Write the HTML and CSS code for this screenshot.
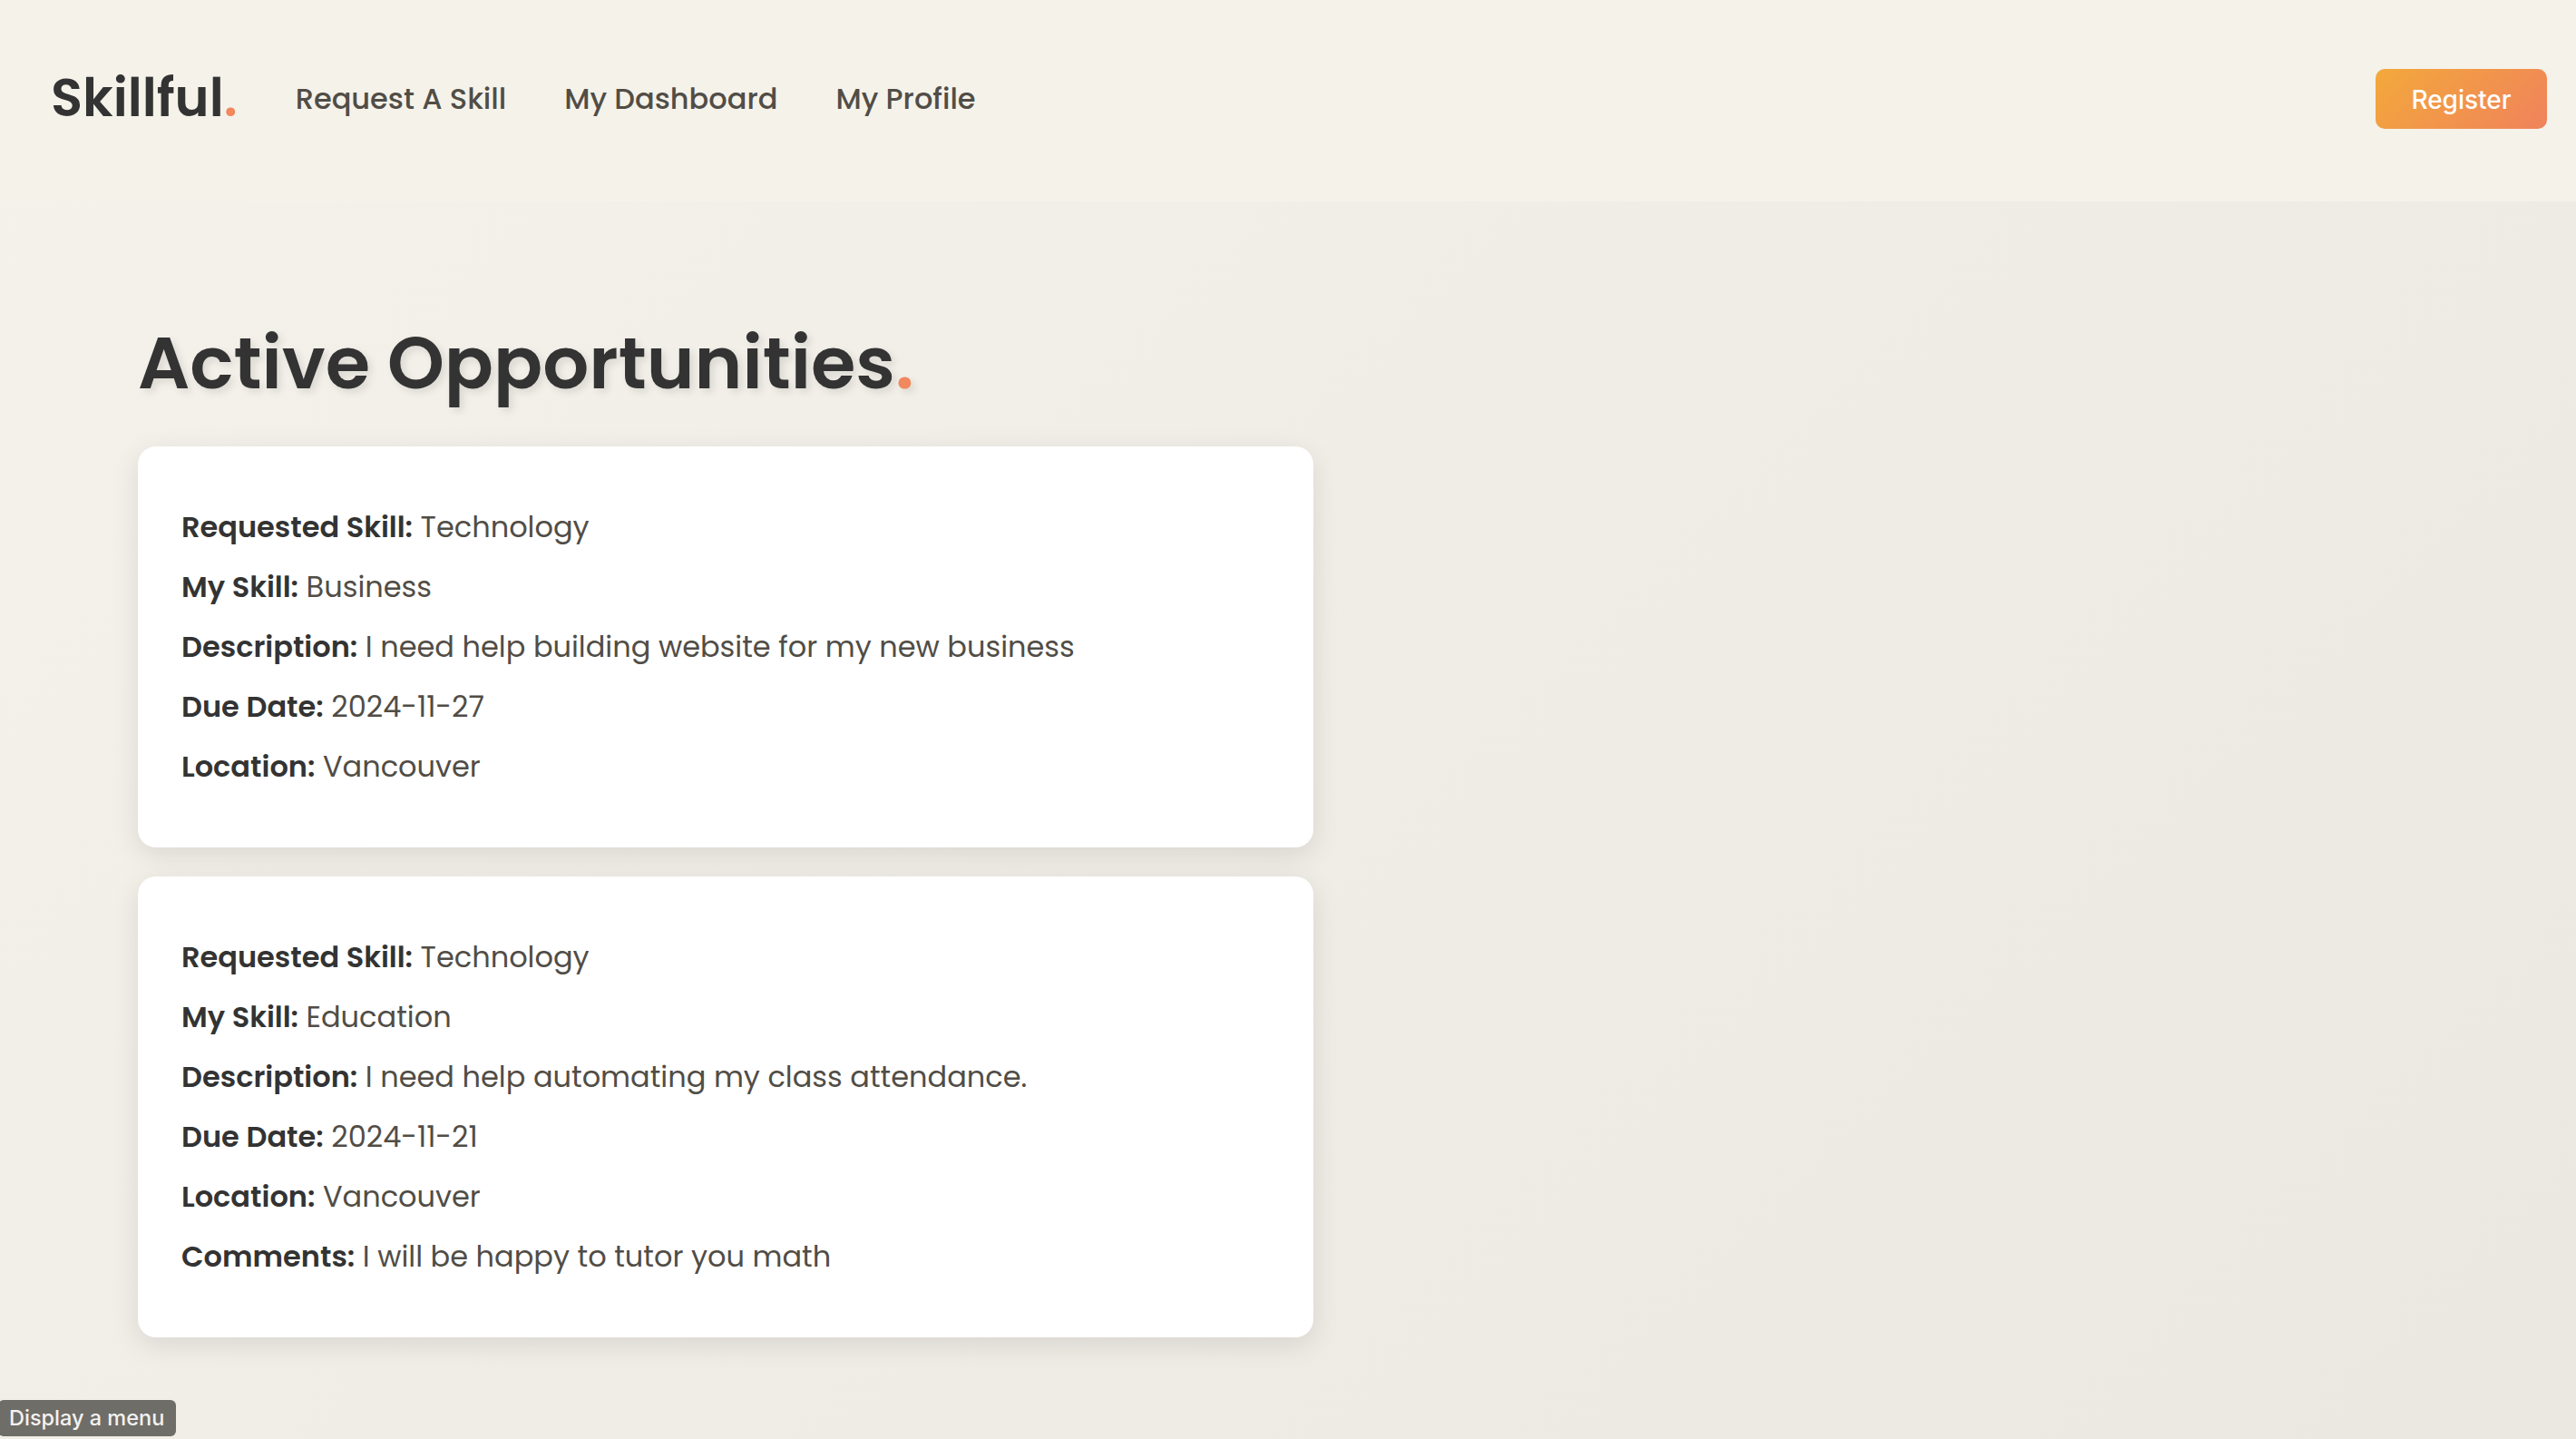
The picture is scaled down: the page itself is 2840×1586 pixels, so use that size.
FILE: index.html
```
<!DOCTYPE html>
<html lang="en">
<head>
  <meta charset="UTF-8">
  <title>Skillful</title>
  <meta name="viewport" content="width=device-width, initial-scale=1.0">
  <link rel="stylesheet" href="styles.css">
</head>
<body>
  <header class="header">
    <nav class="nav">
      <a class="logo" href="#">Skillful<span class="dot">.</span></a>
      <a class="nav-link" href="#">Request A Skill</a>
      <a class="nav-link" href="#">My Dashboard</a>
      <a class="nav-link" href="#">My Profile</a>
    </nav>
    <button class="btn-register" type="button">Register</button>
  </header>

  <main class="content">
    <h1 class="title">Active Opportunities<span class="dot">.</span></h1>

    <div class="card-list">
      <div class="card">
        <p><strong>Requested Skill:</strong> Technology</p>
        <p><strong>My Skill:</strong> Business</p>
        <p><strong>Description:</strong> I need help building website for my new business</p>
        <p><strong>Due Date:</strong> 2024-11-27</p>
        <p><strong>Location:</strong> Vancouver</p>
      </div>

      <div class="card">
        <p><strong>Requested Skill:</strong> Technology</p>
        <p><strong>My Skill:</strong> Education</p>
        <p><strong>Description:</strong> I need help automating my class attendance.</p>
        <p><strong>Due Date:</strong> 2024-11-21</p>
        <p><strong>Location:</strong> Vancouver</p>
        <p><strong>Comments:</strong> I will be happy to tutor you math</p>
      </div>
    </div>
  </main>

  <div class="status">Display a menu</div>
</body>
</html>
```
FILE: styles.css
```
* {
  box-sizing: border-box;
}

body {
  margin: 0;
  min-height: 100vh;
  font-family: Poppins, "Open Sans", sans-serif;
  font-size: 32px;
  color: #514d46;
  background: linear-gradient(135deg, #f5f2eb, #ebe8e2);
}

.header {
  display: flex;
  justify-content: space-between;
  align-items: center;
  height: 222px;
  padding: 0 32px 4px 56px;
  background-color: #f5f2ea;
}

.nav {
  display: flex;
  align-items: center;
  gap: 64px;
}

.logo {
  padding-bottom: 3px;
  font-size: 57.6px;
  font-weight: 600;
  color: #333;
  text-decoration: none;
}

.nav-link {
  font-weight: 500;
  color: #514d46;
  text-decoration: none;
}

.dot {
  color: #f1885e;
}

.btn-register {
  width: 189px;
  height: 66px;
  padding: 2px 0 0;
  border: none;
  border-radius: 10px;
  font-family: Inter, sans-serif;
  font-size: 28px;
  font-weight: 500;
  color: white;
  background: linear-gradient(135deg, #f3a93b, #f0825c);
}

.content {
  padding: 118px 152px 0;
}

.title {
  margin: 0 0 32px;
  font-size: 80px;
  font-weight: 600;
  line-height: 120px;
  color: #333;
  text-shadow: 4px 4px 8px rgba(0, 0, 0, 0.1);
}

.card-list {
  display: flex;
  flex-direction: column;
  gap: 32px;
  width: 1296px;
}

.card {
  padding: 48px;
  border-radius: 20px;
  background: white;
  box-shadow: 0 8px 30px rgba(0, 0, 0, 0.1);
}

.card p {
  margin: 16px 0;
  line-height: 50px;
}

.card strong {
  font-weight: 600;
  color: #333;
}

/* link hint in the window corner */
.status {
  position: fixed;
  left: -2px;
  bottom: 3px;
  width: 196px;
  height: 40px;
  padding-left: 12px;
  border-radius: 6px;
  font-family: Inter, sans-serif;
  font-size: 23.5px;
  font-weight: 500;
  line-height: 39px;
  white-space: nowrap;
  color: #f3f2f2;
  background: #6e6d67;
}
```
